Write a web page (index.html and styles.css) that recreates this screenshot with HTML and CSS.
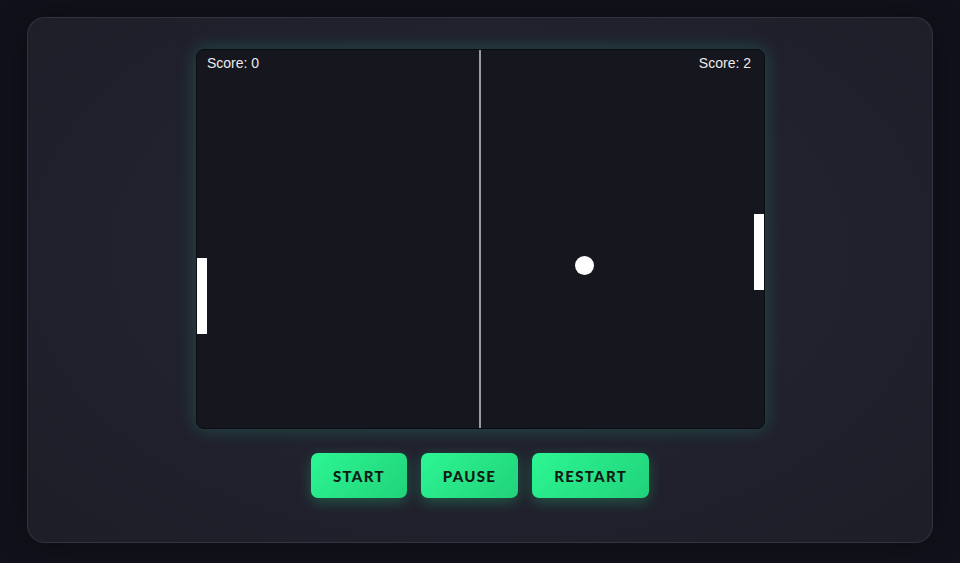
FILE: index.html
```html
<!DOCTYPE html>
<html lang="en">
<head>
<meta charset="utf-8">
<title>Pong</title>
<link rel="stylesheet" href="styles.css">
</head>
<body>
<main class="card">
  <div class="board">
    <div class="midline"></div>
    <span class="score score-left">Score: 0</span>
    <span class="score score-right">Score: 2</span>
    <div class="paddle paddle-left"></div>
    <div class="paddle paddle-right"></div>
    <div class="ball"></div>
  </div>
  <div class="controls">
    <button class="btn">START</button>
    <button class="btn">PAUSE</button>
    <button class="btn">RESTART</button>
  </div>
</main>
</body>
</html>
```
FILE: styles.css
```css
* { box-sizing: border-box; }
html, body { height: 100%; }
body {
  margin: 0;
  background: #11111b;
  padding-top: 17px;
  font-family: "Liberation Sans", Arial, sans-serif;
}
.card {
  width: 906px;
  height: 526px;
  margin: 0 auto;
  border-radius: 18px;
  background: radial-gradient(ellipse at 50% 45%, #262633 0%, #20202c 70%, #1e1e29 100%);
  border: 1px solid rgba(255, 255, 255, 0.09);
  box-shadow: 0 0 30px rgba(0, 0, 0, 0.35);
  display: flex;
  flex-direction: column;
  align-items: center;
  padding-top: 31px;
}
.board {
  position: relative;
  width: 569px;
  height: 380px;
  margin-left: 1px;
  background: #16161e;
  border: 1px solid #0b0d10;
  border-radius: 8px;
  box-shadow: 0 0 18px rgba(40, 200, 150, 0.28);
  overflow: hidden;
}
.midline {
  position: absolute;
  left: 282px;
  top: 0;
  bottom: 0;
  width: 2px;
  background: #9a9aa2;
}
.score {
  position: absolute;
  top: 5px;
  color: #ececec;
  font-size: 14px;
  line-height: 16px;
}
.score-left { left: 10px; }
.score-right { right: 13px; }
.paddle {
  position: absolute;
  width: 10px;
  height: 76px;
  background: #ffffff;
}
.paddle-left { left: 0; top: 208px; }
.paddle-right { right: 0; top: 164px; }
.ball {
  position: absolute;
  left: 378px;
  top: 206px;
  width: 19px;
  height: 19px;
  border-radius: 50%;
  background: #ffffff;
}
.controls {
  display: flex;
  gap: 14px;
  margin-top: 24px;
}
.btn {
  height: 45px;
  padding: 0 22px;
  border: none;
  border-radius: 7px;
  background: linear-gradient(135deg, #2df693 0%, #21d27a 100%);
  color: #101a15;
  font-family: Lato, "Open Sans", sans-serif;
  font-weight: 900;
  font-size: 15px;
  letter-spacing: 1.3px;
  box-shadow: 0 4px 14px rgba(40, 230, 140, 0.28);
  cursor: pointer;
}
```
